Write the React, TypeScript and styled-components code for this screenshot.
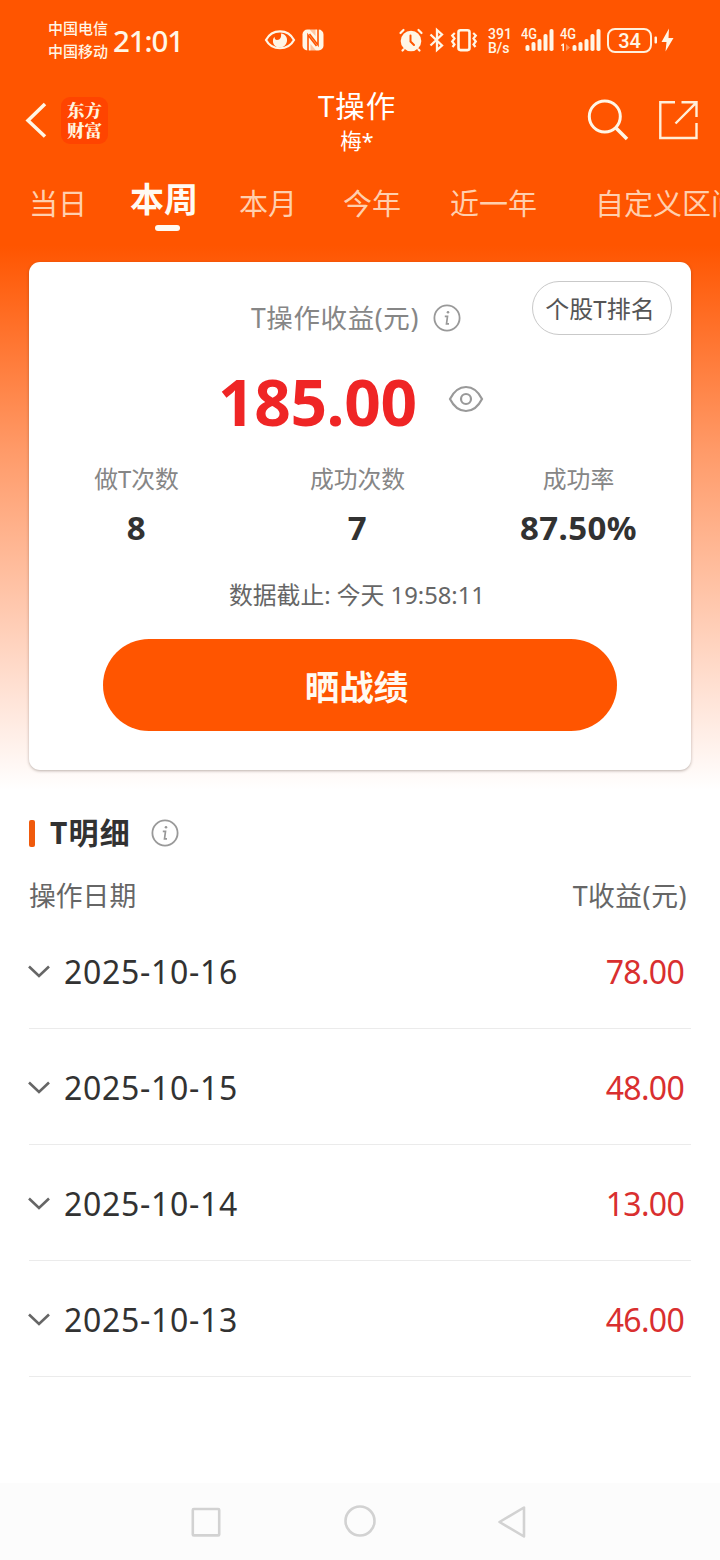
import React from 'react';
import styled, { createGlobalStyle } from 'styled-components';

const Global = createGlobalStyle`
  * { box-sizing: border-box; }
  html, body { margin: 0; padding: 0; background: #fff; }
  body { font-family: 'Noto Sans', 'Noto Sans CJK SC', sans-serif; color: #323232; }
  svg { display: block; flex: none; }
`;

const Screen = styled.div`
  width: 720px;
  height: 1560px;
  overflow: hidden;
  display: flex;
  flex-direction: column;
  background: linear-gradient(180deg, #ff5500 0, #ff5500 246px, #ff9a68 450px, #ffccb4 620px, #ffe4d8 700px, #ffffff 790px);
`;

const StatusBar = styled.div`
  height: 80px;
  flex: none;
  display: flex;
  align-items: center;
  padding-left: 48px;
  color: #fff6e6;
`;

const Carriers = styled.div`
  width: 65px;
  font-size: 15px;
  line-height: 23px;
  font-weight: 500;
  font-family: 'Noto Sans CJK SC', sans-serif;
  padding-bottom: 2px;
`;

const Clock = styled.div`
  width: 151px;
  font-size: 29.5px;
  line-height: 40px;
  letter-spacing: -1.1px;
  font-weight: 500;
  padding-top: 2px;
`;

const StatusIcons = styled.div<{ $width: number; $gap?: number }>`
  width: ${p => p.$width}px;
  flex: none;
  display: flex;
  align-items: center;
  gap: ${p => p.$gap || 0}px;
`;

const Speed = styled.div`
  width: 28px;
  flex: none;
  margin: 0 0 0 5px;
  font: 500 14px/14px Roboto, sans-serif;
  padding-top: 1px;
`;

const Signal = styled.svg`
  font: 500 14.5px Roboto, sans-serif;
`;

const Battery = styled.div`
  width: 45px;
  height: 25px;
  flex: none;
  margin-left: 1px;
  border: 2px solid #fff0dc;
  border-radius: 8px;
  text-align: center;
  font: 500 20px/22px Roboto, sans-serif;
`;

const Bolt = styled.svg`
  margin-left: -3px;
`;

const NavBar = styled.div`
  height: 90px;
  flex: none;
  display: grid;
  grid-template-columns: 260px 194px 1fr;
  color: #fff;
`;

const NavLeft = styled.div`
  display: flex;
  align-items: center;
  height: 80px;
  padding-left: 25px;
`;

const Logo = styled.div`
  width: 47px;
  height: 47px;
  margin-left: 14px;
  border-radius: 9px;
  background: #ff4400;
  color: #fff3df;
  font: 900 17.5px/20px 'Noto Serif CJK SC', 'Noto Sans CJK SC', serif;
  text-align: center;
  padding-top: 3px;
`;

const NavTitle = styled.div`
  text-align: center;
  font-size: 29.5px;
  line-height: 40px;
  letter-spacing: 0.9px;
  padding-top: 6px;
`;

const NavSub = styled.div`
  margin-top: 0;
  font-size: 21.5px;
  line-height: 30px;
  letter-spacing: 0;
`;

const NavRight = styled.div`
  display: flex;
  align-items: center;
  justify-content: flex-end;
  height: 80px;
  gap: 29px;
  padding-right: 22px;
`;

const Tabs = styled.div`
  height: 92px;
  flex: none;
  display: flex;
  padding-left: 29px;
  overflow: hidden;
  white-space: nowrap;
`;

const Tab = styled.div<{ $active?: boolean; $gap: number }>`
  flex: none;
  display: flex;
  flex-direction: column;
  align-items: center;
  margin-left: ${p => p.$gap}px;
  font-family: 'Noto Sans CJK SC', sans-serif;
  font-size: ${p => (p.$active ? 34 : 29)}px;
  font-weight: ${p => (p.$active ? 700 : 400)};
  color: ${p => (p.$active ? '#fffaf2' : '#ffcfae')};
  line-height: 40px;
  padding-top: ${p => (p.$active ? 8 : 12)}px;
`;

const TabMark = styled.div`
  width: 25px;
  height: 6px;
  margin-top: 7px;
  margin-left: 7px;
  border-radius: 3px;
  background: #fffaf2;
`;

const Card = styled.section`
  height: 508px;
  flex: none;
  margin: 0 29px;
  border-radius: 11px;
  background: #fff;
  box-shadow: 0 1px 3px rgba(60, 40, 30, 0.35);
  display: flex;
  flex-direction: column;
`;

const CardHead = styled.div`
  height: 93px;
  display: grid;
  grid-template-columns: 222px 1fr 140px;
  padding-right: 19px;
`;

const CardLabel = styled.div`
  grid-column: 2;
  display: flex;
  align-items: center;
  gap: 14px;
  height: 40px;
  margin-top: 36px;
  font-size: 26.5px;
  line-height: 42px;
  letter-spacing: 0.6px;
  color: #868686;
  white-space: nowrap;
`;

const RankButton = styled.button`
  width: 140px;
  height: 54px;
  margin-top: 19px;
  padding: 2px 4px 0 0;
  border: 1px solid #c9c9c9;
  border-radius: 27px;
  background: #fff;
  color: #555;
  font: 400 24px/50px 'Noto Sans', 'Noto Sans CJK SC', sans-serif;
  white-space: nowrap;
`;

const Amount = styled.div`
  height: 90px;
  display: flex;
  align-items: center;
  padding: 3px 0 0 189px;
  font-size: 64px;
  line-height: 90px;
  font-weight: 700;
  letter-spacing: -0.4px;
  color: #ef2525;
`;

const EyeSlot = styled.span`
  margin-left: 31px;
  padding-bottom: 6px;
`;

const Stats = styled.div`
  display: grid;
  grid-template-columns: repeat(3, 1fr);
  padding: 16px 2px 0 0;
  margin-left: -3px;
  text-align: center;
`;

const StatLabel = styled.div`
  font-size: 23.8px;
  line-height: 36px;
  color: #868686;
`;

const StatValue = styled.div`
  margin-top: 8px;
  font-size: 33px;
  line-height: 46px;
  font-weight: 700;
  letter-spacing: 0.4px;
  color: #323232;
`;

const Deadline = styled.div`
  margin: 26px 6px 0 0;
  text-align: center;
  font-size: 23.8px;
  line-height: 36px;
  color: #666;
`;

const ShareButton = styled.button`
  width: 514px;
  height: 92px;
  margin: 26px auto 0 74px;
  padding: 0 7px 0 0;
  border: 0;
  border-radius: 46px;
  background: #ff5500;
  color: #fffaf2;
  font: 700 34.5px/92px 'Noto Sans CJK SC', sans-serif;
`;

const Details = styled.section`
  flex: 1;
  padding: 43px 29px 0;
`;

const DetailsTitle = styled.h2`
  display: flex;
  align-items: center;
  height: 40px;
  margin: 0;
  font-size: 30px;
  line-height: 42px;
  font-weight: 700;
  letter-spacing: 1.2px;
  &::before {
    content: '';
    width: 6px;
    height: 27px;
    margin-right: 15px;
    border-radius: 2px;
    background: #f05a0c;
  }
`;

const InfoSlot = styled.span`
  margin-left: 20px;
`;

const TableHead = styled.div`
  display: flex;
  justify-content: space-between;
  height: 60px;
  padding: 23px 4px 0 0;
  font-size: 26.8px;
  line-height: 40px;
  color: #666;
`;

const HeadAmount = styled.span`
  letter-spacing: 0.5px;
`;

const Row = styled.div`
  display: flex;
  align-items: center;
  height: 116px;
  padding: 2px 7px 0 0;
  border-bottom: 1px solid #ebebeb;
  font-size: 32px;
`;

const RowDate = styled.span`
  margin-left: 14px;
  letter-spacing: 0.7px;
`;

const RowAmount = styled.span`
  margin-left: auto;
  color: #d92f2f;
  letter-spacing: -0.7px;
`;

const Chevron = styled.svg`
  margin-left: -1px;
`;

const SystemNav = styled.nav`
  height: 77px;
  flex: none;
  display: flex;
  align-items: center;
  justify-content: space-between;
  padding: 0 193px 0 191px;
  background: #fcfcfc;
`;

const InfoIcon = () => (
  <svg width="28" height="28" viewBox="0 0 28 28" fill="none" stroke="#999" strokeWidth="1.8">
    <circle cx="14" cy="14" r="12.6" />
    <path d="M11.800 12.300h2.700l-1 7.600h2.500" strokeWidth="1.700" />
    <circle cx="15" cy="8.300" r="1.300" fill="#999" stroke="none" />
  </svg>
);

const bars = [
  [0, 6], [6, 9], [12, 12], [18, 17], [24, 22],
];

const SignalIcon = ({ data }: { data?: boolean }) => (
  <Signal width={data ? 42 : 33} height="28" viewBox={data ? '0 0 42 28' : '0 0 33 28'} fill="#fff6e6">
    <text x={data ? 1 : 0} y="13" textLength="16" lengthAdjust="spacingAndGlyphs">4G</text>
    {bars.map(([x, h]) => (
      <rect key={x} x={x + (data ? 13.5 : 4.5)} y={25 - h} width="4" height={h} rx="1.8" />
    ))}
    {data && <path d="M2 19l2-1.500h1V25H3.500v-5.500L2 20z" />}
    {data && <path d="M7 18l4 3.500L7 25z" opacity=".4" />}
  </Signal>
);

const rows = [
  ['2025-10-16', '78.00'],
  ['2025-10-15', '48.00'],
  ['2025-10-14', '13.00'],
  ['2025-10-13', '46.00'],
];

const stats = [
  ['做T次数', '8'],
  ['成功次数', '7'],
  ['成功率', '87.50%'],
];

export default function App() {
  return (
    <Screen>
      <Global />
      <StatusBar>
        <Carriers>中国电信<br />中国移动</Carriers>
        <Clock>21:01</Clock>
        <StatusIcons $width={134} $gap={6}>
          <svg width="32" height="24" viewBox="0 0 32 24" fill="none">
            <path d="M2 12C8 .5 24 .5 30 12C24 23 8 23 2 12Z" stroke="#fff6e6" strokeWidth="2.200" />
            <path d="M17 5.500c4 .5 6.500 3.500 6 7.500-.5 4-4 7-8 6.500-4-.5-6.500-3.500-6-7.500.2-1.500.7-2.500 1.500-3.300 0 1.800.8 3.300 2.500 3.300 3.500 0 4.500-3 4-6.500z" fill="#fff6e6" />
          </svg>
          <svg width="22" height="22" viewBox="0 0 22 22" fill="none">
            <rect x="0.500" y="0.500" width="21" height="21" rx="5" fill="#fff6e6" />
            <path d="M6 22V6L14.500 17M16 0V16L7.500 5" stroke="#ff5500" strokeWidth="1.600" />
            <path d="M8.500 22v-7L14 21.500V22zM13.500 0v7L8 1V0z" fill="#ff5500" opacity=".3" />
          </svg>
        </StatusIcons>
        <StatusIcons $width={280} $gap={5}>
          <svg width="26" height="26" viewBox="0 0 26 26" fill="none" stroke="#fff6e6" strokeLinecap="round">
            <circle cx="13" cy="14" r="10.300" fill="#fff6e6" stroke="none" />
            <path d="M2.500 6L5.500 3M23.500 6L20.500 3M5.500 22.500l-1 1M20.500 22.500l1 1" strokeWidth="2.200" />
            <path d="M12.500 8.500v6l3.500 3.500" stroke="#ff5500" strokeWidth="2" />
          </svg>
          <svg width="16" height="26" viewBox="0 0 16 26" fill="none" stroke="#fff6e6" strokeWidth="2.300">
            <path d="M1.500 7.500L13 18.500l-5 4.500V3l5 4.500L1.500 18.500" />
          </svg>
          <svg width="28" height="26" viewBox="0 0 28 26" fill="none" stroke="#fff6e6" strokeWidth="2.200">
            <rect x="8.500" y="3.300" width="11" height="19.800" rx="2" strokeWidth="2.600" />
            <path d="M4.800 6L2.200 8.500l2.300 3-2.300 3 2.300 3-2 2.500M23.200 6l2.600 2.500-2.300 3 2.300 3-2.300 3 2 2.500" />
          </svg>
          <Speed>391<br />B/s</Speed>
          <SignalIcon />
          <SignalIcon data />
          <Battery>34</Battery>
          <Bolt width="21" height="24" viewBox="0 0 21 24" fill="#fff6e6">
            <rect x="0.500" y="8.500" width="2.500" height="7" rx="1" />
            <path d="M15 0.500L7.500 14h5L11.500 23.500l8-13.500h-5z" />
          </Bolt>
        </StatusIcons>
      </StatusBar>

      <NavBar>
        <NavLeft>
          <svg width="22" height="36" viewBox="0 0 22 36" fill="none" stroke="#fff6e6" strokeWidth="3.500">
            <path d="M20 2L3 18.500l17 16" />
          </svg>
          <Logo>东方<br />财富</Logo>
        </NavLeft>
        <NavTitle>
          T操作
          <NavSub>梅*</NavSub>
        </NavTitle>
        <NavRight>
          <svg width="42" height="42" viewBox="0 0 42 42" fill="none" stroke="#fff6e6" strokeWidth="3">
            <circle cx="17.800" cy="17.500" r="15.500" />
            <path d="M29 29L40 40" strokeWidth="3.500" />
          </svg>
          <svg width="40" height="40" viewBox="0 0 40 40" fill="none" stroke="#ffeed8" strokeWidth="2.400">
            <path d="M17 2.300H2.300V38H38.500V23M23.500 2.300H38.500V17M38 2.800L17.500 23.500" />
          </svg>
        </NavRight>
      </NavBar>

      <Tabs>
        <Tab $gap={0}>当日</Tab>
        <Tab $gap={43} $active>本周<TabMark /></Tab>
        <Tab $gap={41}>本月</Tab>
        <Tab $gap={46}>今年</Tab>
        <Tab $gap={49}>近一年</Tab>
        <Tab $gap={58}>自定义区间</Tab>
      </Tabs>

      <Card>
        <CardHead>
          <CardLabel>T操作收益(元)<InfoIcon /></CardLabel>
          <RankButton>个股T排名</RankButton>
        </CardHead>
        <Amount>
          185.00
          <EyeSlot>
            <svg width="36" height="28" viewBox="0 0 36 28" fill="none" stroke="#999" strokeWidth="2.200">
              <path d="M2 14C10-2 26-2 34 14C26 30 10 30 2 14Z" />
              <circle cx="18" cy="14" r="5" />
            </svg>
          </EyeSlot>
        </Amount>
        <Stats>
          {stats.map(([label, value]) => (
            <div key={label}>
              <StatLabel>{label}</StatLabel>
              <StatValue>{value}</StatValue>
            </div>
          ))}
        </Stats>
        <Deadline>数据截止: 今天 19:58:11</Deadline>
        <ShareButton>晒战绩</ShareButton>
      </Card>

      <Details>
        <DetailsTitle>T明细<InfoSlot><InfoIcon /></InfoSlot></DetailsTitle>
        <TableHead><span>操作日期</span><HeadAmount>T收益(元)</HeadAmount></TableHead>
        {rows.map(([date, amount]) => (
          <Row key={date}>
            <Chevron width="22" height="14" viewBox="0 0 22 14" fill="none" stroke="#666" strokeWidth="2.600">
              <path d="M1 1.500L11 11L21 1.500" />
            </Chevron>
            <RowDate>{date}</RowDate>
            <RowAmount>{amount}</RowAmount>
          </Row>
        ))}
      </Details>

      <SystemNav>
        <svg width="30" height="30" viewBox="0 0 30 30" fill="none" stroke="#d2d2d2" strokeWidth="2.600">
          <rect x="1.800" y="2" width="26.400" height="26.400" rx="1" />
        </svg>
        <svg width="34" height="34" viewBox="0 0 34 34" fill="none" stroke="#d2d2d2" strokeWidth="2.600">
          <circle cx="18" cy="16" r="14.500" />
        </svg>
        <svg width="30" height="34" viewBox="0 0 30 34" fill="none" stroke="#d2d2d2" strokeWidth="2.600" strokeLinejoin="round">
          <path d="M27 2.500V31.500L2.500 17Z" />
        </svg>
      </SystemNav>
    </Screen>
  );
}
